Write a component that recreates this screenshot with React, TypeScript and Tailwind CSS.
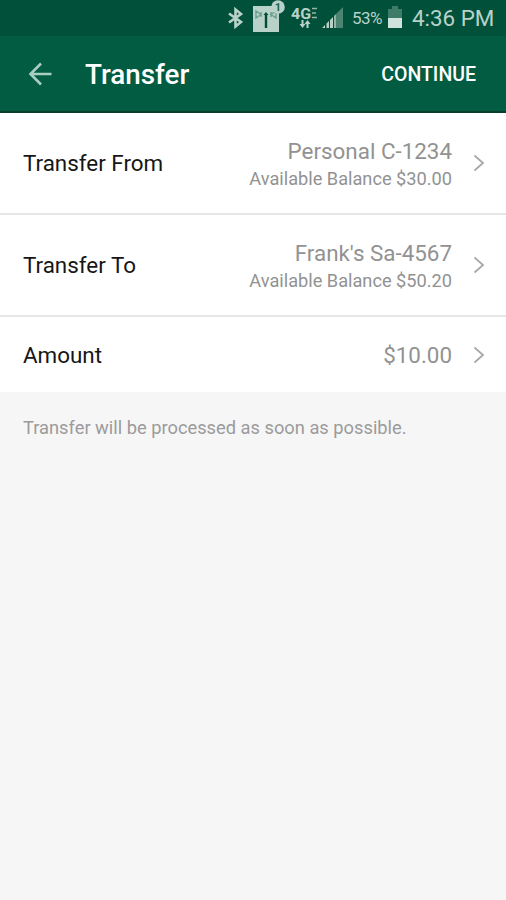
type RowProps = {
    label: string;
    value: string;
    detail?: string;
};

const rows: RowProps[] = [
    { label: "Transfer From", value: "Personal C-1234", detail: "Available Balance $30.00" },
    { label: "Transfer To", value: "Frank's Sa-4567", detail: "Available Balance $50.20" },
    { label: "Amount", value: "$10.00" },
];

function StatusBar() {
    return (
        <div className="flex h-9 items-center bg-[#00503a] pr-[13px] text-[#b9d2c9]">
            <svg className="ml-auto h-[22px] w-[16px]" viewBox="0 0 16 22" fill="none" stroke="currentColor" strokeWidth="2.6">
                <path d="M2 6.5L14 15L8.5 19.5V2.5L14 7L2 15.5" />
            </svg>

            {/* hotspot with a notification count */}
            <svg className="ml-[9px] h-9 w-[34px]" viewBox="0 0 34 36">
                <path d="M1 6H27V32H1Z" fill="currentColor" />
                <path d="M14 14V28" stroke="#004c37" strokeWidth="2.4" />
                <path d="M14 12L11.5 15H16.5Z" fill="#004c37" />
                <path d="M4 11V18L9 14.5ZM24 11V18L19 14.5ZM9 12V17M19 12V17" fill="none" stroke="#6c9d8c" strokeWidth="1.4" />
                <circle cx="26" cy="7" r="6.8" fill="currentColor" />
                <text x="26" y="11" textAnchor="middle" fontSize="11" fontWeight="700" fill="#17654c">1</text>
            </svg>

            <svg className="ml-[5px] h-9 w-[28px]" viewBox="0 0 28 36" fill="currentColor">
                <text x="0" y="18.5" fontSize="15" fontWeight="700" textLength="20" lengthAdjust="spacingAndGlyphs">4G</text>
                <path d="M21 8.5H26M21 13H25M21 17.5H26" stroke="currentColor" strokeWidth="1.6" opacity=".8" />
                <path d="M11.5 20V26M16.5 22V28" stroke="currentColor" strokeWidth="2" />
                <path d="M8.5 24H14.5L11.5 28ZM13.5 24H19.5L16.5 20Z" />
            </svg>

            <svg className="ml-[2px] h-9 w-[23px]" viewBox="0 0 23 36">
                <path d="M1 28L4 25V28ZM5.5 28V23.5L8 21V28ZM9 28V20L12 17V28Z" fill="currentColor" />
                <path d="M13 28V16L15 14V28Z" fill="#8fb8a9" />
                <path d="M15 28V14L22 7V28Z" fill="#4c8471" />
            </svg>

            <span className="ml-[8px] w-[31px] pt-0.5 text-[17px] tracking-[-0.6px] whitespace-nowrap">53%</span>

            <svg className="ml-[4px] h-9 w-[16px]" viewBox="0 0 16 36">
                <path d="M5 6H11V9H15V28H1V9H5Z" fill="#3f7c67" />
                <path d="M1 18H15V28H1Z" fill="#d0e2dc" />
            </svg>

            <span className="ml-[9px] w-[81px] pt-0.5 text-[22.4px] whitespace-nowrap">4:36 PM</span>
        </div>
    );
}

function Header() {
    return (
        <header className="flex h-[77px] items-center border-b-2 border-[#0a3d27] bg-[#015c42] pr-[30px] pl-7 text-white">
            <button aria-label="Back" className="text-[#a9cdbf]">
                <svg className="h-6 w-6" viewBox="0 0 24 24" fill="none" stroke="currentColor" strokeWidth="2.6">
                    <path d="M23.5 12H2.5M13 1.5L2.5 12L13 22.5" />
                </svg>
            </button>
            <h1 className="ml-[33px] pt-[3px] text-[27.8px] font-medium">Transfer</h1>
            <button className="ml-auto pt-[3px] text-[19.5px] font-medium">CONTINUE</button>
        </header>
    );
}

function Row({ label, value, detail }: RowProps) {
    return (
        <div className={`flex items-center bg-white pr-[21px] pl-[23px] ${detail ? "h-[102px] border-b-2 border-[#e6e6e6]" : "h-[75px]"}`}>
            <span className="pt-0.5 text-[22.4px] text-[#161616]">{label}</span>
            <div className={`ml-auto text-right text-[#929292] ${detail ? "pt-1" : "pt-px"}`}>
                <p className="text-[22.4px] leading-[28px]">{value}</p>
                {detail && <p className="text-[18.2px] leading-[28px]">{detail}</p>}
            </div>
            <svg className="ml-[21px] h-[18px] w-3" viewBox="0 0 12 18" fill="none" stroke="#a8a8a8" strokeWidth="1.8">
                <path d="M1.5 1.5L10 9L1.5 16.5" />
            </svg>
        </div>
    );
}

export default function App() {
    return (
        <div className="min-h-screen bg-[#f6f6f6] font-[Roboto,sans-serif]">
            <StatusBar />
            <Header />
            {rows.map((row) => (
                <Row key={row.label} {...row} />
            ))}
            <p className="mt-[22px] pl-[23px] text-[18.3px] leading-[27px] text-[#9b9b9b]">
                Transfer will be processed as soon as possible.
            </p>
        </div>
    );
}
